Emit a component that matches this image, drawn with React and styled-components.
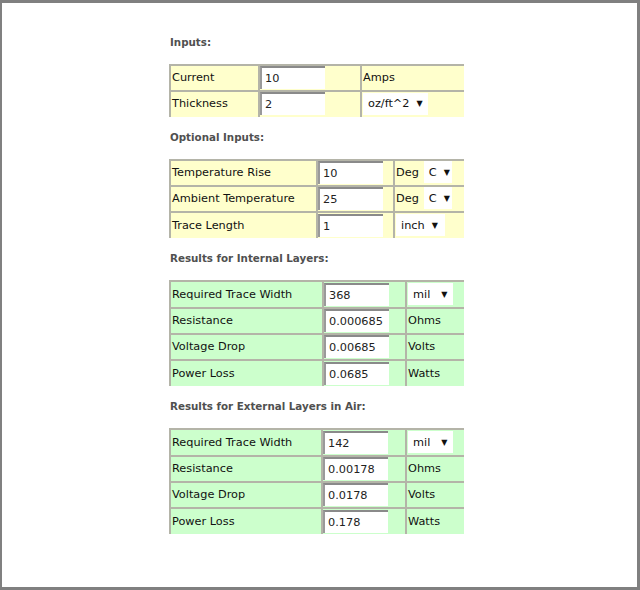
import React from "react";
import styled, { createGlobalStyle } from "styled-components";

const RowColors = {
	input: "#ffffcc",
	result: "#ccffcc"
};

const GlobalStyle = createGlobalStyle`
	html, body {
		margin: 0;
		padding: 0;
		background: #ffffff;
	}
	body {
		font-family: "DejaVu Sans", Verdana, sans-serif;
	}
`;

const Frame = styled.div`
	box-sizing: border-box;
	width: 640px;
	height: 590px;
	border: 3px solid #808080;
	border-left-width: 2px;
	background: #ffffff;
	padding: 32px 0 0 167px;
`;

const Heading = styled.h3`
	margin: 0 0 15px 1px;
	height: 14px;
	line-height: 14px;
	font-size: 10.3px;
	font-weight: bold;
	color: #505050;
`;

const Section = styled.section`
	& + & {
		margin-top: 13px;
	}
`;

const Table = styled.table`
	width: 294px;
	border-collapse: collapse;
	table-layout: fixed;
`;

const Cell = styled.td`
	box-sizing: border-box;
	height: ${props => props.$h}px;
	padding: 0 0 1px 1px;
	border-top: 2px solid #b4b4a8;
	border-left: 2px solid #b4b4a8;
	background: ${props => RowColors[props.$kind]};
	font-size: 11.3px;
	color: #111111;
	white-space: nowrap;
	vertical-align: middle;
`;

const ValueBox = styled.div`
	box-sizing: border-box;
	width: 65px;
	height: 23px;
	margin-left: -1px;
	padding: 2px 0 0 3px;
	background: #ffffff;
	border-top: 2px solid #8a8a8a;
	border-left: 2px solid #9a9a9a;
	font-size: 11.3px;
	line-height: 17px;
	color: #222222;
`;

const SelectBox = styled.span`
	display: inline-flex;
	align-items: center;
	box-sizing: border-box;
	width: ${props => props.$w}px;
	height: 22px;
	padding-left: 5px;
	background: #ffffff;
	font-size: 11.3px;
	color: #111111;
`;

const Arrow = styled.span`
	margin-left: ${props => props.$gap}px;
	font-size: 8px;
	color: #111111;
`;

const UnitText = styled.span`
	margin-right: 5px;
`;

const Select = ({ value, width, gap = 7 }) => (
	<SelectBox $w={width}>
		{value}
		<Arrow $gap={gap}>▼</Arrow>
	</SelectBox>
);

const sections = [
	{
		title: "Inputs:",
		kind: "input",
		cols: [89, 102, 103],
		h: 25.5,
		rows: [
			{ label: "Current", value: "10", unit: "Amps" },
			{ label: "Thickness", value: "2", select: "oz/ft^2", sw: 65 }
		]
	},
	{
		title: "Optional Inputs:",
		kind: "input",
		cols: [147, 77, 70],
		h: 26.3,
		rows: [
			{ label: "Temperature Rise", value: "10", unit: "Deg", select: "C", sw: 28 },
			{ label: "Ambient Temperature", value: "25", unit: "Deg", select: "C", sw: 28 },
			{ label: "Trace Length", value: "1", select: "inch", sw: 49 }
		]
	},
	{
		title: "Results for Internal Layers:",
		kind: "result",
		cols: [153, 83, 58],
		h: 26.25,
		rows: [
			{ label: "Required Trace Width", value: "368", select: "mil", sw: 45, gap: 11 },
			{ label: "Resistance", value: "0.000685", unit: "Ohms" },
			{ label: "Voltage Drop", value: "0.00685", unit: "Volts" },
			{ label: "Power Loss", value: "0.0685", unit: "Watts" }
		]
	},
	{
		title: "Results for External Layers in Air:",
		kind: "result",
		cols: [152, 84, 58],
		h: 26.25,
		rows: [
			{ label: "Required Trace Width", value: "142", select: "mil", sw: 45, gap: 11 },
			{ label: "Resistance", value: "0.00178", unit: "Ohms" },
			{ label: "Voltage Drop", value: "0.0178", unit: "Volts" },
			{ label: "Power Loss", value: "0.178", unit: "Watts" }
		]
	}
];

const App = () => (
	<>
		<GlobalStyle />
		<Frame>
			{sections.map(section => (
				<Section key={section.title}>
					<Heading>{section.title}</Heading>
					<Table>
						<colgroup>
							{section.cols.map((w, i) => (
								<col key={i} style={{ width: w }} />
							))}
						</colgroup>
						<tbody>
							{section.rows.map(row => (
								<tr key={row.label}>
									<Cell $kind={section.kind} $h={section.h}>
										{row.label}
									</Cell>
									<Cell $kind={section.kind} $h={section.h}>
										<ValueBox>{row.value}</ValueBox>
									</Cell>
									<Cell $kind={section.kind} $h={section.h}>
										{row.unit && (row.select ? <UnitText>{row.unit}</UnitText> : row.unit)}
										{row.select && <Select value={row.select} width={row.sw} gap={row.gap} />}
									</Cell>
								</tr>
							))}
						</tbody>
					</Table>
				</Section>
			))}
		</Frame>
	</>
);

export default App;
